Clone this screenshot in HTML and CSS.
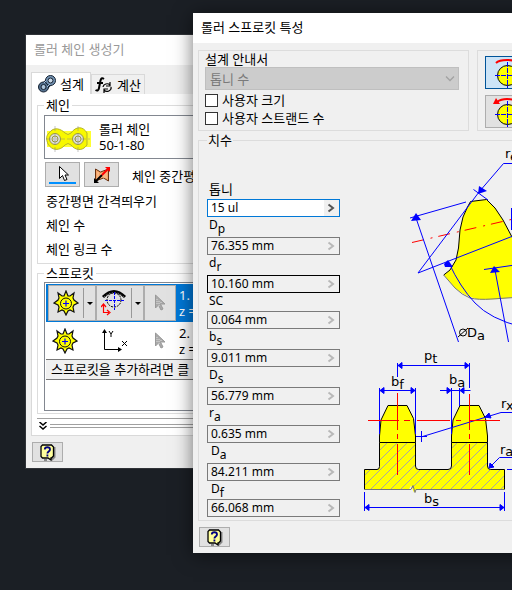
FILE: index.html
```html
<!DOCTYPE html>
<html lang="ko">
<head>
<meta charset="utf-8">
<title>롤러 스프로킷 특성</title>
<link rel="stylesheet" href="styles.css">
</head>
<body>
<svg class="defs" aria-hidden="true">
  <defs>
    <symbol id="sprocket" viewBox="0 0 26 26">
      <path d="M13 1l2 5 2 0 4-3-1 5 1 2 4 3-4 2-1 2 1 5-4-2-2 1-2 4-2-4-2-1-4 2 1-5-1-2-4-2 4-3 1-2-1-5 4 3 2 0z" fill="#ff0" stroke="#111" stroke-width="1.2"/>
      <circle cx="13" cy="13.500" r="5.500" fill="#ff0" stroke="#111"/>
      <path d="M10 13.500h6M13 10.500v6" stroke="#00f" stroke-width="1.200"/>
    </symbol>
    <symbol id="cursor" viewBox="0 0 12 18">
      <path d="M1.500 1v13l3-3 2.500 5 2-1-2.500-5h4.500z" fill="#aaa" stroke="#999"/>
      <path d="M3 5v5M5 7v5M7 8v2" stroke="#ddd" stroke-dasharray="1 1"/>
    </symbol>
    <symbol id="help" viewBox="0 0 16 17">
      <path d="M4 16h3M14.500 3v10l-3 3" stroke="#888" stroke-width="2" fill="none"/>
      <path d="M2.500 1h9l2 2v9l-2 2h-.5v2l-3-2h-5.500l-1.500-1.500V2.500z" fill="#ffff9c" stroke="#000" stroke-width="1.300"/>
      <path d="M4.800 5.500c0-3 5.200-3 5.200 0 0 2-2.600 2-2.600 4M7.400 10.500v2" fill="none" stroke="#000080" stroke-width="1.800"/>
    </symbol>
    <symbol id="arrow" viewBox="0 0 8 10">
      <path d="M1.500 1.500L6 5 1.500 8.500" fill="none" stroke="currentColor" stroke-width="2"/>
    </symbol>
  </defs>
</svg>
<main class="desktop">

  <section class="window generator">
    <h1 class="titlebar inactive">롤러 체인 생성기</h1>
    <nav class="tabs">
      <button class="tab current" type="button">
        <svg width="18" height="18" viewBox="0 0 18 18"><path d="M5.500 12.500L12.500 5.500" stroke="#1b2838" stroke-width="8"/><circle cx="5.500" cy="12" r="5" fill="#526f8d" stroke="#142030"/><circle cx="12.500" cy="5.500" r="5" fill="#7595b5" stroke="#142030"/><circle cx="5.500" cy="12" r="2.500" fill="#adc4da" stroke="#142030"/><circle cx="12.500" cy="5.500" r="2.500" fill="#c9d9e8" stroke="#142030"/><path d="M6 8l2-2M9 12l3-3" stroke="#a3c1df"/></svg>
        설계
      </button>
      <button class="tab" type="button">
        <svg width="18" height="18" viewBox="0 0 18 18"><path d="M9 3c-3-2-3.500 1-4 4l-1 5c-.5 3-2 3-3.500 2M2 7h6" fill="none" stroke="#000" stroke-width="2"/><path d="M8 11a4 3.500 0 0 1 7-2M16 11a4 3.500 0 0 1-7 3M15 6v4h-4M9 17v-4h4" fill="none" stroke="#000" stroke-width="1.200"/></svg>
        계산
      </button>
    </nav>
    <div class="page">
      <fieldset class="group">
        <legend>체인</legend>
        <div class="chainbox">
          <svg width="46" height="26" viewBox="0 0 46 26"><path d="M2 5h44v16H2z" fill="#ffff30"/><path d="M4 7C9 0 16 3 20 7q3 3 6 0C31 0 38 0 42 7v12c-5 7-12 5-16 0q-3-3-6 0c-5 6-13 6-17-1C1 13 1 10 4 7z" fill="#f8f800" stroke="#b4b428"/><g fill="#ddd" stroke="#9a9a3a"><circle cx="10" cy="13" r="5.500"/><circle cx="33" cy="13" r="5.500"/><circle cx="10" cy="13" r="3"/><circle cx="33" cy="13" r="3"/></g><path d="M10 0v26M33 0v26M1 13h44" stroke="#888" stroke-width=".5" stroke-dasharray="5 2"/></svg>
          <span>롤러 체인<br>50-1-80</span>
        </div>
        <div class="tools">
          <button class="tool" type="button" aria-label="선택"><svg width="27" height="20" viewBox="0 0 27 20"><path d="M10.500 1.500v12l3-3 2 5 2.500-1-2-4.500h3.500z" fill="#fff" stroke="#000"/><path d="M0 18h27" stroke="#0090ff" stroke-width="2"/></svg></button>
          <button class="tool" type="button" aria-label="반전"><svg width="18" height="18" viewBox="0 0 18 18"><path d="M2.500 3l5 3 8-3v12l-5-3-8 3z" fill="#f3a468" stroke="#68300f"/><path d="M5 6v7M8 7v5M11 6v6M13 5v7" stroke="#ffc99d"/><path d="M3 15l6-6" stroke="#000" stroke-width="2"/><path d="M9 9l6-6" stroke="#f00" stroke-width="2"/><path d="M1 12v5h5z"/><path d="M12 1h5v5z" fill="#f00"/></svg></button>
          <span class="tooltext">체인 중간평</span>
        </div>
        <div class="line">중간평면 간격띄우기</div>
        <div class="line">체인 수</div>
        <div class="line">체인 링크 수</div>
      </fieldset>
      <fieldset class="group">
        <legend>스프로킷</legend>
        <div class="list">
          <div class="item selected">
            <button class="cell split" type="button" aria-label="스프로킷 1"><svg width="26" height="26"><use href="#sprocket"/></svg><i class="caret"></i></button>
            <button class="cell split" type="button" aria-label="배치 1"><svg width="26" height="28" viewBox="0 0 26 28"><path d="M2 8Q13-3 24 8" fill="none" stroke="#000" stroke-width="3"/><path d="M3 8Q13-1 23 8" fill="none" stroke="#999" stroke-dasharray="1 2"/><circle cx="13" cy="11" r="7" fill="none" stroke="#000" stroke-dasharray="2 1"/><path d="M4 11.500h19M13.500 3v18" stroke="#00f" stroke-dasharray="3 1"/><path d="M2.500 17v6.500H8M0 18l2.500-3L5 18M6 21l3 2.500L6 26" fill="none" stroke="#f00" stroke-width="1.200"/></svg><i class="caret"></i></button>
            <button class="cell" type="button" aria-label="선택 1"><svg width="12" height="18"><use href="#cursor"/></svg></button>
            <span class="itemtext">1.<br>z =</span>
          </div>
          <div class="item">
            <button class="cell split" type="button" aria-label="스프로킷 2"><svg width="26" height="26"><use href="#sprocket"/></svg></button>
            <button class="cell split" type="button" aria-label="배치 2"><svg width="28" height="26" viewBox="0 0 28 26"><path d="M4.500 3v18.500H20M9 3l2 3 2-3M11 6v3M22 13l5 5M27 13l-5 5" fill="none" stroke="#000"/><path d="M2 5l2.500-4L7 5zM18 19l4 2.500L18 24z"/></svg></button>
            <button class="cell" type="button" aria-label="선택 2"><svg width="12" height="18"><use href="#cursor"/></svg></button>
            <span class="itemtext">2.<br>z =</span>
          </div>
          <div class="addrow">스프로킷을 추가하려면 클</div>
        </div>
      </fieldset>
      <div class="expander">
        <button class="more" type="button" aria-label="자세히"><svg width="8" height="8" viewBox="0 0 8 8"><path d="M.5 0L4 3 7.500 0M.5 4L4 7 7.500 4" fill="none" stroke="#000" stroke-width="1.500"/></svg></button>
        <span class="rule"></span>
      </div>
    </div>
    <button class="help" type="button" aria-label="도움말"><svg width="16" height="17"><use href="#help"/></svg></button>
  </section>

  <section class="window dialog">
    <h2 class="titlebar">롤러 스프로킷 특성</h2>
    <div class="top">
      <div class="panel guide">
        <label for="guide">설계 안내서</label>
        <div class="combo">
          <select id="guide" disabled><option>톱니 수</option></select>
          <svg width="10" height="8" viewBox="0 0 10 8"><path d="M1 1.500l4 4 4-4" fill="none" stroke="#a2a2a2" stroke-width="1.300"/></svg>
        </div>
        <label class="check"><input type="checkbox">사용자 크기</label>
        <label class="check"><input type="checkbox">사용자 스트랜드 수</label>
      </div>
      <div class="panel turns">
        <button class="turn on" type="button" aria-label="시계 방향"><svg width="43" height="31" viewBox="0 0 43 31"><circle cx="21.500" cy="18.500" r="10" fill="#ff0" stroke="#000"/><path d="M9 18.500h25M21.500 5v26" stroke="#00f" stroke-dasharray="5 1"/><path d="M10 6q3-3 11-3t11 3" fill="none" stroke="#f00" stroke-width="2"/></svg></button>
        <button class="turn" type="button" aria-label="반시계 방향"><svg width="43" height="31" viewBox="0 0 43 31"><circle cx="21.500" cy="18.500" r="10" fill="#ff0" stroke="#000"/><path d="M9 18.500h25M21.500 5v26" stroke="#00f" stroke-dasharray="5 1"/><path d="M11 6q4-3 10-3t11 3" fill="none" stroke="#f00" stroke-width="2"/><path d="M7 8l3-6 4 6z" fill="#f00"/></svg></button>
      </div>
    </div>
    <fieldset class="group dims">
      <legend>치수</legend>
      <div class="dimsbody">
        <div class="fields">
          <label class="plain" for="f1">톱니</label>
          <div class="field active"><input id="f1" value="15 ul"><svg width="8" height="10"><use href="#arrow"/></svg></div>
          <label for="f2">D<sub>p</sub></label>
          <div class="field"><input id="f2" value="76.355 mm" readonly><svg width="8" height="10"><use href="#arrow"/></svg></div>
          <label for="f3">d<sub>r</sub></label>
          <div class="field strong"><input id="f3" value="10.160 mm" readonly><svg width="8" height="10"><use href="#arrow"/></svg></div>
          <label class="plain" for="f4">SC</label>
          <div class="field"><input id="f4" value="0.064 mm" readonly><svg width="8" height="10"><use href="#arrow"/></svg></div>
          <label for="f5">b<sub>s</sub></label>
          <div class="field"><input id="f5" value="9.011 mm" readonly><svg width="8" height="10"><use href="#arrow"/></svg></div>
          <label for="f6">D<sub>s</sub></label>
          <div class="field"><input id="f6" value="56.779 mm" readonly><svg width="8" height="10"><use href="#arrow"/></svg></div>
          <label for="f7">r<sub>a</sub></label>
          <div class="field"><input id="f7" value="0.635 mm" readonly><svg width="8" height="10"><use href="#arrow"/></svg></div>
          <label class="inset" for="f8">D<sub>a</sub></label>
          <div class="field"><input id="f8" value="84.211 mm" readonly><svg width="8" height="10"><use href="#arrow"/></svg></div>
          <label class="inset plain" for="f9">D<sub>f</sub></label>
          <div class="field"><input id="f9" value="66.068 mm" readonly><svg width="8" height="10"><use href="#arrow"/></svg></div>
        </div>
        <svg class="drawing" width="170" height="369" viewBox="352 149 170 369">
          <defs>
            <pattern id="hatch" width="10" height="10" patternUnits="userSpaceOnUse"><path d="M-1 11L11-1M-1 1L1-1M9 11L11 9" stroke="#a8a8a0" stroke-width="1"/></pattern>
          </defs>
          <!-- tooth profile -->
          <path d="M443.700 275L450 270 456 260 458.500 248 460 230 463 217 467.500 207 470.500 201.500 486.500 199.500 495 208 503 220 512 237 522 250V297L512 297.500Q497 300 483 299.500 468 299 455 288z" fill="#ff0"/>
          <path d="M443.700 275L450 270 456 260 458.500 248 460 230 463 217 467.500 207 470.500 201.500 486.500 199.500 495 208 503 220 512 237 522 250" fill="none" stroke="#000"/>
          <path d="M443.700 275L455 288Q462 295 470 298 478 300 492 299L522 297" fill="none" stroke="#777"/>
          <path d="M412 242.500L522 217" stroke="#f00" stroke-dasharray="12 7 2 6" fill="none"/>
          <g fill="none" stroke="#00f">
            <path d="M522 163.500H503.500L479 192 418 273 522 232.500"/>
            <path d="M473.500 189.500L488 200M410 218L466 202M416 218L458.500 342M511.500 208v22"/>
            <path d="M449 263Q460 287 475 303T522 327"/>
            <path d="M484 269.500L522 264M495 270L508.500 342"/>
          </g>
          <g fill="#00f">
            <path d="M478 194l1-8 8 5zM411 221l5-8 5 7zM444 264l4-4 5 7-8 0zM490 273l4-7 6 6z"/>
          </g>
          <!-- strand section -->
          <path d="M364.500 469.500H377q2.500 0 2.500-3V442.500H415.500V466q0 3.500 3 3.500H448q3.500 0 3.500-3.500V442.500H487.500V466q0 3.500 3 3.500H504.500v20H416l-2 3-3-7-2 4H364.500z" fill="#ff0"/>
          <path d="M364.500 469.500H377q2.500 0 2.500-3V442.500H415.500V466q0 3.500 3 3.500H448q3.500 0 3.500-3.500V442.500H487.500V466q0 3.500 3 3.500H504.500v20H364.500z" fill="url(#hatch)"/>
          <path d="M379.500 442.500V436l1.500-16 7-14.500h19l6.500 13 2 17.500v6.500zM451.500 442.500V436l1.500-16 7-14.500h19l6.500 13 2 17.500v6.500z" fill="#ff0" stroke="#000"/>
          <path d="M364.500 489V469.500H377q2.500 0 2.500-3V442.500M415.500 442.500V466q0 3.500 3 3.500H448q3.500 0 3.500-3.500V442.500M487.500 442.500V466q0 3.500 3 3.500H504.500v20" fill="none" stroke="#000"/>
          <path d="M364 489.500h47l2-4 2 7 1-3h89" fill="none" stroke="#777"/>
          <path d="M397.500 363v14M469.500 363v25M397.500 365.500h72M379.500 388v46M415.500 388v46M379.500 390.500h36M440 390.500h12M459.500 390.500h11M451.500 388v46M459.500 388v18M451.500 390.500h8M522 412.500h-21L421 437M416 436.500h11M421.500 431v11M522 457.500h-22.500L489 468M507 469.500h15M364.500 492v19M504.500 492v19M364.500 507.500h140" fill="none" stroke="#00f"/>
          <path d="M398 365.500l4-3v6zM469 365.500l-4-3v6zM380 390.500l4-3v6zM415 390.500l-4-3v6zM451 390.500l-4-3v6zM460 390.500l4-3v6zM365 507.500l4-3v6zM504 507.500l-4-3v6zM485 417l4-4 2 5zM489 468l1-5 4 4z" fill="#00f" stroke="#00f"/>
          <path class="axis" d="M368 420.500H399M404 420.500H410M417 420.500H450M456 420.500H461M469 420.500H500M397.500 393V430M397.500 434V439M397.500 444V475M469.500 394V430M469.500 434V439M469.500 444V475"/>
          <path d="M458 337l10-9" stroke="#000"/><circle cx="463" cy="332.500" r="3.500" fill="none" stroke="#000"/>
          <g class="marks">
            <text x="505" y="158">r<tspan dy="3">e</tspan></text>
            <text x="467" y="337">D<tspan dy="3">a</tspan></text>
            <text x="424" y="360">p<tspan dy="3">t</tspan></text>
            <text x="391" y="386">b<tspan dy="3">f</tspan></text>
            <text x="449" y="384">b<tspan dy="3">a</tspan></text>
            <text x="501" y="408">r<tspan dy="2">x</tspan></text>
            <text x="500" y="454">r<tspan dy="2">a</tspan></text>
            <text x="424" y="503">b<tspan dy="3">s</tspan></text>
          </g>
        </svg>
      </div>
    </fieldset>
    <button class="help" type="button" aria-label="도움말"><svg width="16" height="17"><use href="#help"/></svg></button>
  </section>
</main>
</body>
</html>
```
FILE: styles.css
```css
* { box-sizing: border-box; }
body {
  margin: 0;
  font: 13px/18px "Noto Sans", "Noto Sans CJK KR", sans-serif;
  color: #000;
}
button, input, select { font: inherit; color: inherit; }
button { padding: 0; }
svg { display: block; flex: none; }
.defs { position: absolute; width: 0; height: 0; }

.desktop {
  position: relative;
  min-height: 100vh;
  overflow: hidden;
  background: #1b1f25;
}
.window { position: absolute; padding-bottom: 6px; background: #f0f0f0; }
.generator { left: 26px; top: 35px; right: 40px; box-shadow: 0 0 0 1px #303338; }
.dialog { left: 193px; top: 13px; right: -20px; box-shadow: 0 2px 18px rgba(0, 0, 0, .55); }

.titlebar {
  margin: 0;
  padding: 5px 8px 7px;
  background: #fff;
  font-size: 13px;
  font-weight: 400;
}
.inactive { color: #999; }

.tabs { display: flex; align-items: flex-end; padding: 7px 5px 0; }
.tab {
  display: flex;
  align-items: center;
  gap: 4px;
  height: 20px;
  padding: 0 3px;
  border: 1px solid #d9d9d9;
  border-bottom: 0;
  background: #f0f0f0;
}
.tab.current { height: 22px; padding: 0 6px; background: #fff; }
.page { margin: 0 5px; padding: 2px 5px 5px; border: 1px solid #d9d9d9; border-top: 0; background: #fff; }

.group { margin: 0; padding: 0 6px 2px; border: 1px solid #dcdcdc; min-width: 0; }
legend { padding: 0 2px; line-height: 18px; }

.chainbox {
  display: flex;
  align-items: center;
  gap: 8px;
  height: 44px;
  margin-top: 1px;
  border: 1px solid #828790;
  line-height: 16px;
}
.chainbox svg { margin-top: 4px; }
.tools { display: flex; gap: 4px; margin: 3px 0 2px; padding-left: 1px; }
.tool {
  display: grid;
  place-items: center;
  width: 35px;
  height: 25px;
  border: 1px solid #adadad;
  background: #e1e1e1;
}
.tooltext { padding: 5px 0 0 9px; }
.line { padding-left: 2px; line-height: 24px; }

.list { height: 129px; padding: 1px; border: 1px solid #828790; }
.item { display: flex; height: 37px; padding: 0 2px; }
.item.selected { height: 38px; background: #0078d7; color: #fff; padding: 1px 2px; }
.cell {
  display: flex;
  align-items: center;
  justify-content: center;
  width: 32px;
  border: 0;
  background: none;
}
.selected .cell { border: 1px solid #adadad; background: #e1e1e1; }
.cell.split { width: 48px; justify-content: flex-start; padding-left: 4px; gap: 4px; }
.caret { align-self: stretch; margin: 2px 0; width: 10px; border-left: 1px solid #999; display: grid; place-items: center end; }
.caret::after { content: ""; border: 3px solid transparent; border-top: 3px solid #000; border-bottom: 0; }
.itemtext { padding-left: 3px; line-height: 16px; align-self: center; white-space: nowrap; }
.addrow { padding-left: 5px; border-top: 1px solid #777; border-bottom: 1px solid #777; background: #f0f0f0; line-height: 19px; }

.expander { display: flex; align-items: center; gap: 3px; margin-top: 4px; padding: 3px 0 0 2px; border-top: 1px solid #a0a0a0; }
.more { padding: 0; border: 0; background: none; }
.rule { flex: 1; height: 4px; border: 1px solid #a0a0a0; border-width: 1px 0; }
.help {
  display: grid;
  place-items: center;
  width: 31px;
  height: 20px;
  margin: 6px 6px 0;
  border: 1px solid #adadad;
  background: #e1e1e1;
}

.top { display: grid; grid-template-columns: 271px 1fr; gap: 8px; padding: 7px 5px 0; }
.panel { height: 81px; border: 1px solid #dcdcdc; }
.guide { padding: 0 9px 0 6px; }
.guide label { display: block; line-height: 16px; }
.combo { display: grid; align-items: center; height: 23px; }
.combo > * { grid-area: 1 / 1; }
.combo select {
  width: 100%;
  height: 23px;
  padding: 0 4px;
  appearance: none;
  border: 1px solid #bfbfbf;
  border-radius: 0;
  background: #ccc;
  color: #7a7a7a;
  opacity: 1;
}
.combo svg { justify-self: end; margin-right: 4px; }
.guide .check { display: flex; align-items: center; gap: 4px; line-height: 18px; }
.combo + .check { margin-top: 1px; }
.check input {
  appearance: none;
  width: 13px;
  height: 13px;
  margin: 0;
  border: 1px solid #333;
  background: #fff;
}
.turns { display: flex; flex-direction: column; gap: 6px; padding: 5px 7px; }
.turn { width: 45px; height: 33px; border: 1px solid #adadad; background: #e1e1e1; }
.turn.on { border-color: #005499; background: #cce4f7; }

.dims { margin: 0 5px; padding: 0 8px 2px; }
.dims legend { padding: 0 1px; }
.dimsbody { display: flex; gap: 12px; }
.fields { flex: none; width: 133px; padding-top: 32px; }
.fields label { display: block; height: 20px; padding-left: 2px; font-size: 12px; line-height: 16px; }
.fields .plain { height: 18px; }
.fields .inset { padding-left: 4px; }
.fields label:first-child { font-size: 13px; }
sub { font-size: 12px; line-height: 0; vertical-align: -4px; }
.field {
  display: flex;
  align-items: center;
  height: 18px;
  padding-right: 4px;
  border: 1px solid #7a7a7a;
  color: #b8b8b8;
}
.field input {
  flex: 1;
  min-width: 0;
  height: 16px;
  padding: 0 3px;
  border: 0;
  outline: 0;
  background: none;
  color: #000;
  font-size: 12px;
}
.field.active { border-color: #0078d7; background: linear-gradient(90deg, #fff 116px, #f0f0f0 116px); color: #555; }
.field.strong { border-color: #000; }
.axis { fill: none; stroke: #f00; stroke-width: 1px; }
.marks { font: 13px "DejaVu Sans", sans-serif; }
```
